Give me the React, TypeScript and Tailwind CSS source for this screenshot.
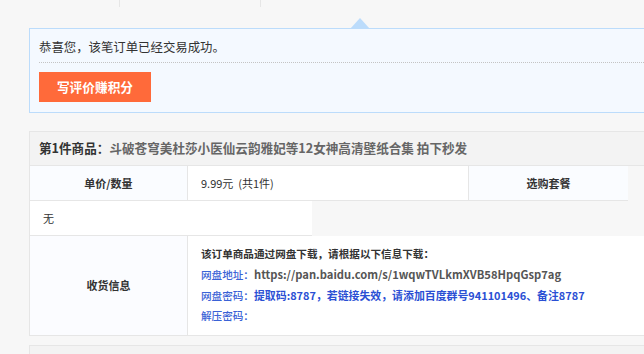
import React from "react";

export default function App() {
  const font = { fontFamily: '"Noto Sans CJK SC", "Noto Sans", sans-serif' };
  return (
    <div className="w-[644px] h-[354px] overflow-hidden bg-[#f7f7f7] text-[#333]" style={font}>
      <div className="ml-[119px] w-[142px] h-[7px] border-x border-[#e6e6e6]" />
      <div className="relative mt-[21px] ml-[29px] h-[85px] border border-r-0 border-[#bcdcfb] bg-[#f4f9ff] pl-[9px]">
        <div className="absolute left-[320px] top-[-11px] w-0 h-0 border-x-[10px] border-x-transparent border-b-[11px] border-b-[#bcdcfb]" />
        <div className="h-[34px] pt-[9px] leading-[18px] text-[12.4px] border-b border-dotted border-[#c4c4c4]">
          恭喜您，该笔订单已经交易成功。
        </div>
        <div className="mt-[9px] w-[112px] h-[30px] bg-[#ff6a3a] text-white font-bold text-[12.7px] flex items-center justify-center">
          写评价赚积分
        </div>
      </div>

      <div className="mt-[18px] ml-[29px] border border-r-0 border-[#e6e6e6]">
        <div className="h-[34px] bg-[#f3f3f3] flex items-center pl-[9px] font-bold text-[12.6px] border-b border-[#e6e6e6]">
          <span className="text-[#333]">第1件商品：</span>
          <span className="text-[#666]">斗破苍穹美杜莎小医仙云韵雅妃等12女神高清壁纸合集 拍下秒发</span>
        </div>
        <div className="flex h-[35px] text-[11px]">
          <div className="w-[158px] bg-[#fafcff] border-r border-b border-[#e6e6e6] flex items-center justify-center font-bold">
            单价/数量
          </div>
          <div className="w-[281px] bg-white border-r border-b border-[#e6e6e6] flex items-center pl-[13px] whitespace-pre">
            9.99元  (共1件)
          </div>
          <div className="w-[159px] bg-[#fafcff] border-b border-[#e6e6e6] flex items-center justify-center font-bold">
            选购套餐
          </div>
        </div>
        <div className="flex h-[35px] text-[11px]">
          <div className="w-[282px] bg-white border-b border-[#e6e6e6] flex items-center pl-[13px]">无</div>
        </div>
        <div className="flex h-[99px] bg-white">
          <div className="w-[158px] bg-[#fbfcff] border-r border-[#e6e6e6] flex items-center justify-center font-bold text-[11px]">
            收货信息
          </div>
          <div className="flex-1 pl-[13px] pt-[8px] text-[10.6px] leading-[20px] font-bold">
            <div className="text-[#333]">该订单商品通过网盘下载，请根据以下信息下载：</div>
            <div>
              <span className="text-[#3a62d6] font-medium">网盘地址：</span>
              <span className="text-[#555] text-[11.2px]">https://pan.baidu.com/s/1wqwTVLkmXVB58HpqGsp7ag</span>
            </div>
            <div className="text-[#2a4fd4] text-[10.9px]">
              <span className="text-[#3a62d6] font-medium text-[10.6px]">网盘密码：</span>
              提取码:8787，若链接失效，请添加百度群号941101496、备注8787
            </div>
            <div className="text-[#3a62d6] font-medium">解压密码：</div>
          </div>
        </div>
      </div>

      <div className="mt-[9px] ml-[29px] h-[40px] border border-r-0 border-[#e6e6e6] bg-[#f3f3f3]" />
    </div>
  );
}
